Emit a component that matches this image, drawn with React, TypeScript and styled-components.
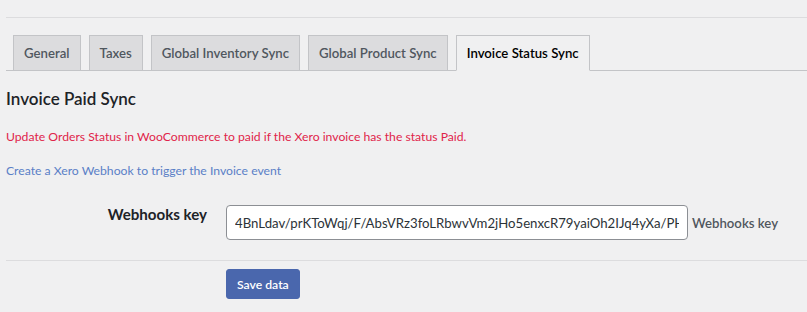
import React from 'react';
import styled, { createGlobalStyle } from 'styled-components';

const GlobalStyle = createGlobalStyle`
  body {
    margin: 0;
    background: #f0f0f1;
    font-family: 'Lato', 'Open Sans', sans-serif;
    color: #3c434a;
    font-size: 12.2px;
  }
`;

const Page = styled.div`
  padding: 17px 0 0 6px;
`;

const TopRule = styled.hr`
  margin: 0;
  border: 0;
  border-top: 1px solid #dcdcde;
`;

const TabBar = styled.nav`
  display: flex;
  gap: 8px;
  margin-top: 17px;
  padding-left: 7px;
  border-bottom: 1px solid #c3c4c7;
`;

const Tab = styled.a<{ $active?: boolean }>`
  display: block;
  height: 34px;
  line-height: 34px;
  padding: 0 10px;
  margin-bottom: -1px;
  border: 1px solid #c3c4c7;
  border-bottom-color: ${(p) => (p.$active ? '#f0f0f1' : '#c3c4c7')};
  background: ${(p) => (p.$active ? '#f0f0f1' : '#dcdcde')};
  color: ${(p) => (p.$active ? '#000' : '#50575e')};
  font-size: 13.2px;
  font-weight: 600;
  text-decoration: none;
  white-space: nowrap;
`;

const Heading = styled.h2`
  margin: 16px 0 0;
  font-size: 17px;
  font-weight: 600;
  line-height: 24px;
  color: #1d2327;
`;

const Notice = styled.p<{ $tone: 'alert' | 'link' }>`
  margin: 17px 0 0;
  line-height: 17px;
  font-size: 12.2px;
  color: ${(p) => (p.$tone === 'alert' ? '#e0244a' : '#5a7fc7')};
`;

const FieldRow = styled.div`
  display: flex;
  align-items: flex-start;
  margin-top: 26px;
  padding-bottom: 20px;
  border-bottom: 1px solid #dcdcde;
`;

const Label = styled.label`
  box-sizing: border-box;
  width: 220px;
  padding: 0 19px 0 0;
  text-align: right;
  font-size: 15.1px;
  font-weight: 700;
  line-height: 18px;
  color: #1d2327;
`;

const KeyInput = styled.input`
  box-sizing: border-box;
  width: 462px;
  height: 35px;
  padding: 0 8px;
  border: 1px solid #8c8f94;
  border-radius: 4px;
  background: #fff;
  font-family: inherit;
  font-size: 13.2px;
  color: #2c3338;
`;

const Hint = styled.span`
  align-self: center;
  margin-left: 4px;
  font-size: 13.2px;
  font-weight: 600;
  color: #50575e;
`;

const Actions = styled.div`
  padding: 8px 0 0 220px;
`;

const SaveButton = styled.button`
  height: 30px;
  padding: 0 10px;
  border: 1px solid #4a67ad;
  border-radius: 3px;
  background: #4a67ad;
  color: #fff;
  font-family: inherit;
  font-size: 12.2px;
  font-weight: 600;
`;

const tabs = ['General', 'Taxes', 'Global Inventory Sync', 'Global Product Sync', 'Invoice Status Sync'];

export default function App() {
  return (
    <Page>
      <GlobalStyle />
      <TopRule />
      <TabBar>
        {tabs.map((t) => (
          <Tab key={t} href="#" $active={t === 'Invoice Status Sync'}>
            {t}
          </Tab>
        ))}
      </TabBar>
      <Heading>Invoice Paid Sync</Heading>
      <Notice $tone="alert">
        Update Orders Status in WooCommerce to paid if the Xero invoice has the status Paid.
      </Notice>
      <Notice $tone="link">Create a Xero Webhook to trigger the Invoice event</Notice>
      <FieldRow>
        <Label htmlFor="webhooks-key">Webhooks key</Label>
        <KeyInput
          id="webhooks-key"
          defaultValue="4BnLdav/prKToWqj/F/AbsVRz3foLRbwvVm2jHo5enxcR79yaiOh2IJq4yXa/PHhJ"
        />
        <Hint>Webhooks key</Hint>
      </FieldRow>
      <Actions>
        <SaveButton type="button">Save data</SaveButton>
      </Actions>
    </Page>
  );
}
